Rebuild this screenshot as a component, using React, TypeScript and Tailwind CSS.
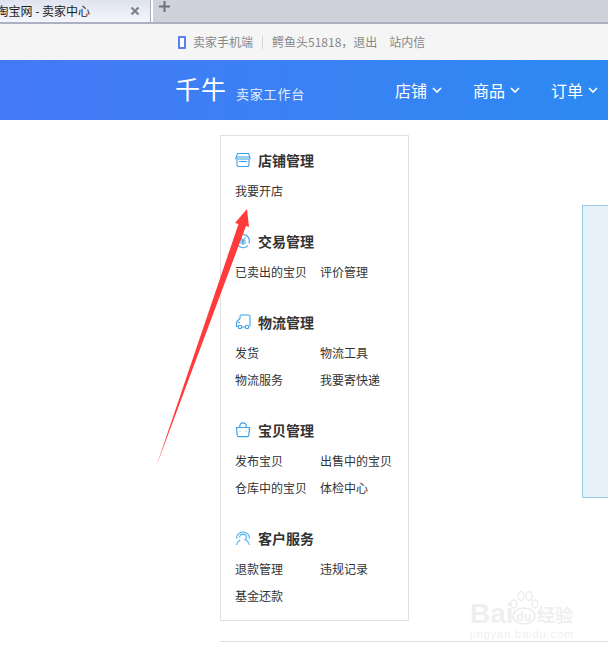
import React from "react";

const font = { fontFamily: '"Noto Sans CJK SC", "Liberation Sans", sans-serif' };

const Store = () => (
  <svg width="16" height="16" viewBox="0 0 16 16" fill="none" stroke="#3ba0ea" strokeWidth="1.1">
    <path d="M2.5 1.5h11l1.5 4v1.5H1V5.5z" />
    <path d="M1 5h14M2 7.5V13a1.5 1.5 0 0 0 1.5 1.5h9A1.5 1.5 0 0 0 14 13V7.5" />
    <path d="M4 9.5h8" />
  </svg>
);
const Trade = () => (
  <svg width="16" height="16" viewBox="0 0 16 16" fill="none" stroke="#3ba0ea" strokeWidth="1.1">
    <path d="M8 1.5a6.5 6.5 0 0 1 6 9M13 12.5a6.5 6.5 0 0 1-10.5-1" />
    <path d="M5.5 4.5 8 7.5l2.5-3M5 8h6M5 10h6M8 7.5V12" />
  </svg>
);
const Truck = () => (
  <svg width="16" height="16" viewBox="0 0 16 16" fill="none" stroke="#3ba0ea" strokeWidth="1.1">
    <path d="M3 12.5H1.5V8L5 4.5V2.5A1.5 1.5 0 0 1 6.5 1H13.5A1.5 1.5 0 0 1 15 2.5V12.5" />
    <path d="M3 8.5h2M7 13h3" />
    <circle cx="5" cy="13" r="1.7" />
    <circle cx="12" cy="13" r="1.7" />
  </svg>
);
const Bag = () => (
  <svg width="16" height="16" viewBox="0 0 16 16" fill="none" stroke="#3ba0ea" strokeWidth="1.2">
    <path d="M1.5 5.5h13l-.7 8a1.5 1.5 0 0 1-1.5 1.2H3.7a1.5 1.5 0 0 1-1.5-1.2z" />
    <path d="M4.8 5.5V4a3.2 3.2 0 0 1 6.4 0v1.5M5 9v.5M11 9v.5" />
  </svg>
);
const Service = () => (
  <svg width="16" height="16" viewBox="0 0 16 16" fill="none" stroke="#4bb0f0" strokeWidth="1.1">
    <path d="M1.5 8.5A6.5 6.5 0 0 1 14.5 8.5" />
    <path d="M4.6 7.5a3.4 3.4 0 0 1 6.8 0c0 1.3-.8 2.2-2 2.8" />
    <path d="M1.5 15c.5-2.5 2-4 3.6-5M14.5 15c-.5-2.5-2-4-3.6-5" />
  </svg>
);

const Chevron = () => (
  <svg width="10" height="8" viewBox="0 0 10 8" fill="none" stroke="white" strokeWidth="1.6" className="ml-[5px]">
    <path d="M1 2l4 4 4-4" />
  </svg>
);

const sections: { title: string; icon: React.ReactNode; items: string[] }[] = [
  { title: "店铺管理", icon: <Store />, items: ["我要开店"] },
  { title: "交易管理", icon: <Trade />, items: ["已卖出的宝贝", "评价管理"] },
  { title: "物流管理", icon: <Truck />, items: ["发货", "物流工具", "物流服务", "我要寄快递"] },
  { title: "宝贝管理", icon: <Bag />, items: ["发布宝贝", "出售中的宝贝", "仓库中的宝贝", "体检中心"] },
  { title: "客户服务", icon: <Service />, items: ["退款管理", "违规记录", "基金还款"] },
];

export default function App() {
  return (
    <div className="relative w-[608px] h-[656px] overflow-hidden bg-white" style={font}>
      {/* Browser tab strip */}
      <div className="h-6 flex bg-[#cfd2da] border-b-2 border-[#acb1c2]">
        <div className="w-[151px] h-[22px] flex items-center pl-[90px] bg-gradient-to-b from-[#dfe3ee] to-[#f4f6fb] border-r border-[#a9adba] overflow-hidden shrink-0">
          <span className="-ml-[106px] w-[106px] shrink-0 text-[12px] text-[#222] whitespace-nowrap text-right">淘宝网 - 卖家中心</span>
          <svg className="ml-[40px] shrink-0" width="10" height="10" viewBox="0 0 10 10" stroke="#7b818e" strokeWidth="2.2">
            <path d="M1.5 1.5l7 7M8.5 1.5l-7 7" />
          </svg>
        </div>
        <div className="w-[2px] h-[22px] bg-white" />
        <svg className="ml-[6px] mt-[1px]" width="11" height="11" viewBox="0 0 11 11" stroke="#6a6f7c" strokeWidth="2">
          <path d="M5.5 0v11M0 5.5h11" />
        </svg>
      </div>

      {/* Seller top bar */}
      <div className="h-9 bg-[#f5f5f5] flex items-center pl-[178px] text-[12px] text-[#888] whitespace-nowrap">
        <span className="w-[8px] h-[13px] border-2 border-[#5a7ff0] rounded-[1px] bg-white" />
        <span className="ml-[7px]">卖家手机端</span>
        <span className="w-px h-[13px] bg-[#d5d5d5] mx-[9px]" />
        <span>鳄鱼头51818，退出</span>
        <span className="ml-[12px]">站内信</span>
      </div>

      {/* Blue header */}
      <div className="h-[60px] bg-gradient-to-r from-[#4479f6] to-[#2c89f2] flex items-center pl-[175px] text-white whitespace-nowrap">
        <span className="text-[25px] leading-none tracking-[1px] font-normal w-[61px] -mt-[3px]">千牛</span>
        <span className="text-[13px] mt-[8px] tracking-[0.8px] text-[#e4edfd] w-[159px]">卖家工作台</span>
        <span className="w-[78px] flex items-center text-[16px] -mt-[1px]">店铺<Chevron /></span>
        <span className="w-[78px] flex items-center text-[16px] -mt-[1px]">商品<Chevron /></span>
        <span className="flex items-center text-[16px] -mt-[1px]">订单<Chevron /></span>
      </div>

      {/* Main */}
      <div className="flex items-start pl-[220px] pt-[15px]">
        <div className="w-[189px] h-[486px] shrink-0 border border-[#e1e1e1] pl-[14px] pt-[13px]">
          <div className="flex flex-col gap-[26px]">
            {sections.map((s) => (
              <div key={s.title}>
                <div className="h-[22px] flex items-center gap-[7px]">
                  <span className="w-4 h-4 flex items-center">{s.icon}</span>
                  <span className="text-[14px] font-bold text-[#333] leading-none">{s.title}</span>
                </div>
                <div className="grid grid-cols-[85px_85px] mt-[6px] text-[12px] text-[#333]">
                  {s.items.map((it) => (
                    <span key={it} className="h-[27px] leading-[27px] whitespace-nowrap">{it}</span>
                  ))}
                </div>
              </div>
            ))}
          </div>
        </div>
        <div className="ml-[173px] mt-[70px] h-[293px] flex-1 border border-[#9ccbe8] border-r-0 bg-[#e5f0f9]" />
      </div>

      {/* Footer rule */}
      <div className="ml-[220px] mt-[20px] border-t border-[#dedede]" />

      {/* Annotation arrow */}
      <svg className="absolute left-0 top-0" width="608" height="656" viewBox="0 0 608 656">
        <polygon points="156,467 238.5,224 235,223 247,209 249,227 246,226" fill="#ff3b3b" />
      </svg>

      {/* Watermark */}
      <div className="absolute left-[470px] top-[590px] w-[138px] h-[50px] text-[#efefef] whitespace-nowrap">
        <span className="absolute left-0 top-[10px] text-[28px] leading-none font-bold" style={{ fontFamily: '"Liberation Sans", sans-serif' }}>Bai</span>
        <svg className="absolute left-[40px] top-0" width="28" height="36" viewBox="0 0 28 36" fill="none" stroke="#ececec" strokeWidth="1.5">
          <ellipse cx="14" cy="26" rx="11" ry="8" />
          <ellipse cx="4" cy="14" rx="3" ry="4" />
          <ellipse cx="11" cy="6" rx="3" ry="4.5" />
          <ellipse cx="19" cy="6" rx="3" ry="4.5" />
          <ellipse cx="25" cy="14" rx="3" ry="4" />
        </svg>
        <span className="absolute left-[46px] top-[20px] text-[12px] leading-none font-bold">du</span>
        <span className="absolute left-[67px] top-[15px] text-[18px] leading-none font-bold">经验</span>
        <span className="absolute left-0 top-[39px] text-[11px] leading-none tracking-[0.9px]" style={{ fontFamily: '"Liberation Sans", sans-serif' }}>jingyan.baidu.com</span>
      </div>
    </div>
  );
}
